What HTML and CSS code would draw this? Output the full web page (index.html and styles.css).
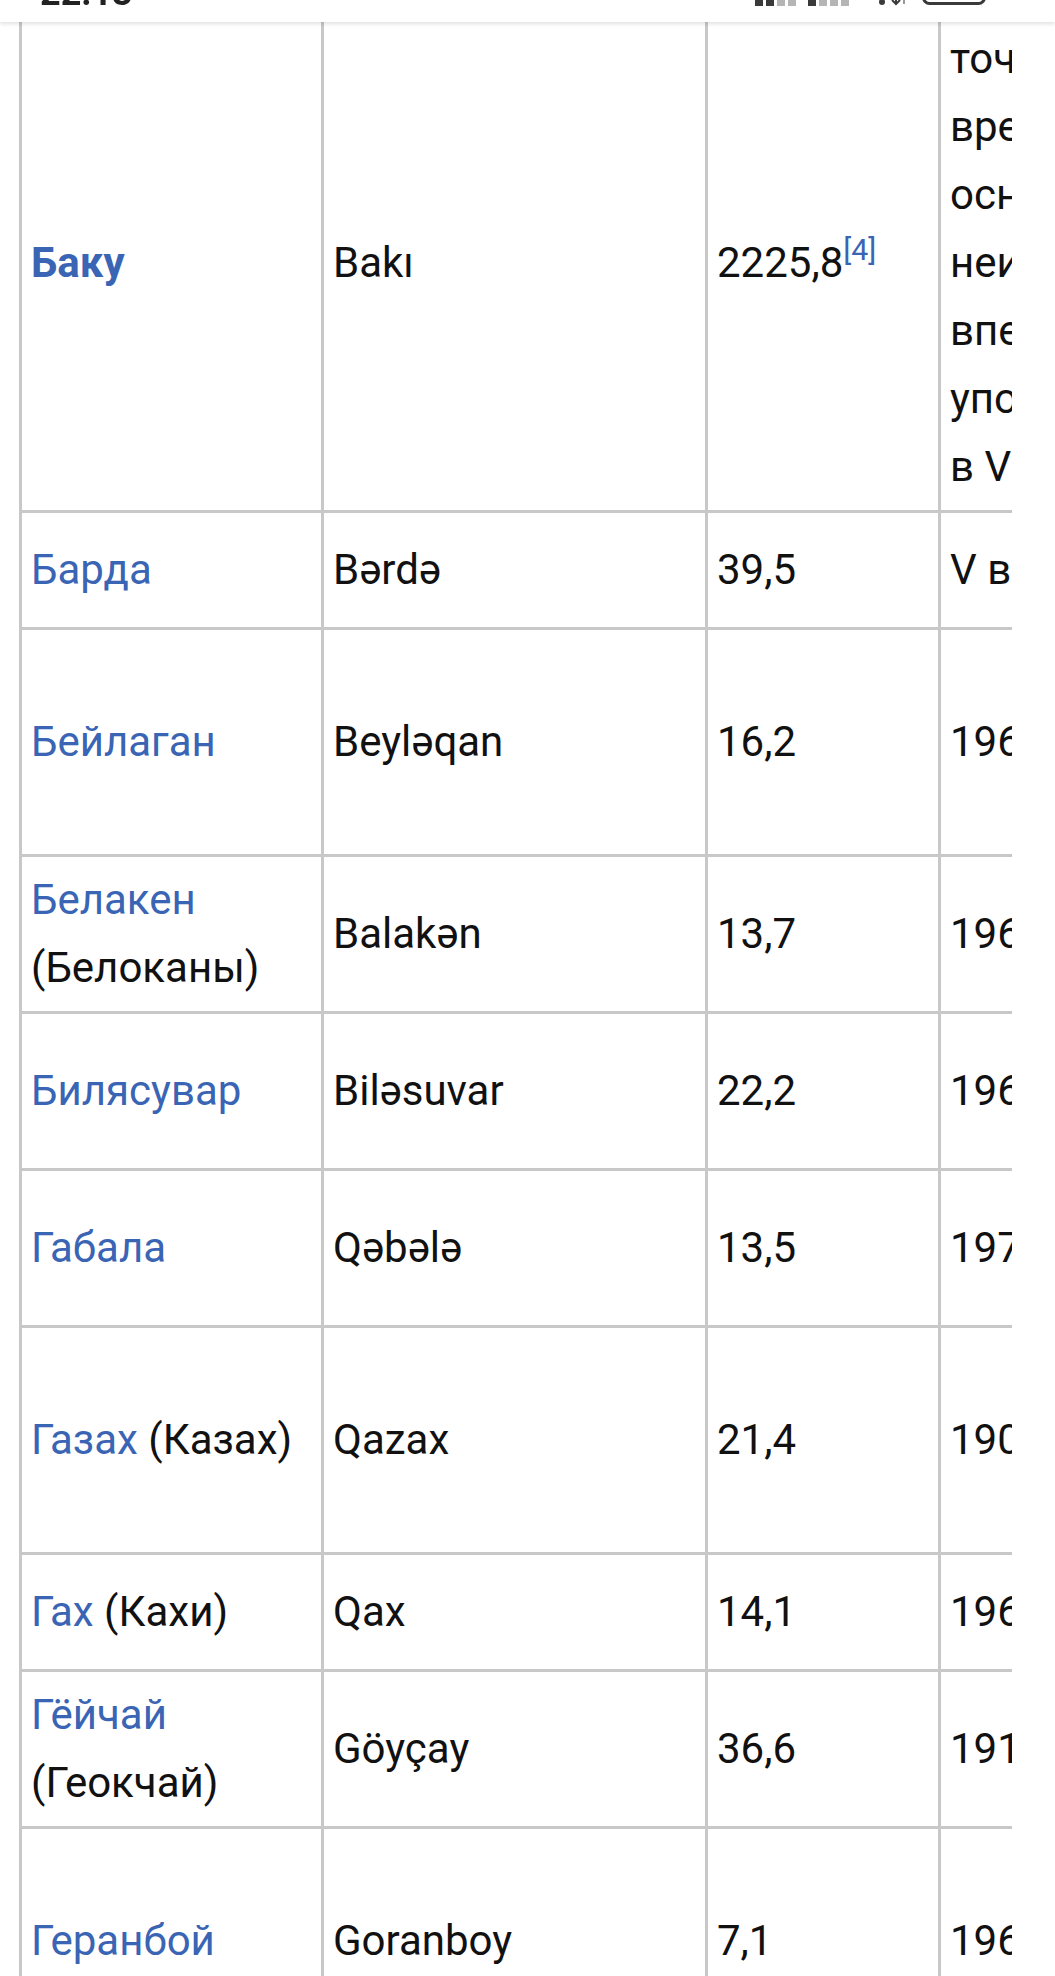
FILE: index.html
```html
<!DOCTYPE html>
<html lang="ru">
<head>
<meta charset="utf-8">
<title>Города Азербайджана</title>
<link rel="stylesheet" href="styles.css">
</head>
<body>
<header class="statusbar">
  <span class="time">22:13</span>
  <svg class="ic sig1" width="44" height="30" viewBox="0 0 44 30"><rect x="0" y="22" width="8" height="8" fill="#3a3a3a"/><rect x="11" y="16" width="8" height="14" fill="#3a3a3a"/><rect x="22" y="10" width="8" height="20" fill="#b5b5b5"/><rect x="33" y="2" width="8" height="28" fill="#b5b5b5"/></svg>
  <svg class="ic sig2" width="42" height="30" viewBox="0 0 42 30"><rect x="0" y="22" width="8" height="8" fill="#3a3a3a"/><rect x="11" y="16" width="8" height="14" fill="#b5b5b5"/><rect x="22" y="10" width="8" height="20" fill="#b5b5b5"/><rect x="33" y="2" width="8" height="28" fill="#b5b5b5"/></svg>
  <svg class="ic data" width="34" height="30" viewBox="0 0 34 30"><circle cx="6" cy="26" r="3" fill="#3a3a3a"/><path d="M20 4v24M16 24l4 4 4-4" stroke="#3a3a3a" stroke-width="2" fill="none"/><path d="M28 28V4M24 8l4-4 4 4" stroke="#9a9a9a" stroke-width="2" fill="none"/></svg>
  <svg class="ic batt" width="64" height="30" viewBox="0 0 64 30"><rect x="1.5" y="1.5" width="61" height="26" rx="6" fill="none" stroke="#3a3a3a" stroke-width="3"/><rect x="20" y="20" width="24" height="4" fill="#3a3a3a"/></svg>
</header>

<main class="scroller">
  <table class="cities">
    <colgroup>
      <col class="c-ru">
      <col class="c-az">
      <col class="c-pop">
      <col class="c-year">
    </colgroup>
    <tbody>
      <tr>
        <td><a class="link bold" href="#">Баку</a></td>
        <td>Bakı</td>
        <td>2225,8<sup class="ref">[4]</sup></td>
        <td>точное время основания неизвестно, впервые упоминается в V веке</td>
      </tr>
      <tr class="r-s">
        <td><a class="link" href="#">Барда</a></td>
        <td>Bərdə</td>
        <td>39,5</td>
        <td>V век</td>
      </tr>
      <tr class="r-l">
        <td><a class="link" href="#">Бейлаган</a></td>
        <td>Beyləqan</td>
        <td>16,2</td>
        <td>1963</td>
      </tr>
      <tr class="r-m">
        <td><a class="link" href="#">Белакен</a> (Белоканы)</td>
        <td>Balakən</td>
        <td>13,7</td>
        <td>1968</td>
      </tr>
      <tr class="r-m">
        <td><a class="link" href="#">Билясувар</a></td>
        <td>Biləsuvar</td>
        <td>22,2</td>
        <td>1963</td>
      </tr>
      <tr class="r-m">
        <td><a class="link" href="#">Габала</a></td>
        <td>Qəbələ</td>
        <td>13,5</td>
        <td>1970</td>
      </tr>
      <tr class="r-l">
        <td><a class="link" href="#">Газах</a> (Казах)</td>
        <td>Qazax</td>
        <td>21,4</td>
        <td>1908</td>
      </tr>
      <tr class="r-s">
        <td><a class="link" href="#">Гах</a> (Кахи)</td>
        <td>Qax</td>
        <td>14,1</td>
        <td>1968</td>
      </tr>
      <tr class="r-m">
        <td><a class="link" href="#">Гёйчай</a> (Геокчай)</td>
        <td>Göyçay</td>
        <td>36,6</td>
        <td>1918</td>
      </tr>
      <tr class="r-l">
        <td><a class="link" href="#">Геранбой</a></td>
        <td>Goranboy</td>
        <td>7,1</td>
        <td>1967</td>
      </tr>
    </tbody>
  </table>
</main>
</body>
</html>
```

FILE: styles.css
```css
html, body {
  margin: 0;
  padding: 0;
  background: #fff;
}

body {
  font-family: Roboto, "Noto Sans", "Liberation Sans", sans-serif;
  color: #111;
}

.statusbar {
  position: fixed;
  top: 0;
  left: 0;
  right: 0;
  height: 22px;
  background: #fff;
  box-shadow: 0 2px 4px rgba(0, 0, 0, 0.12);
  overflow: hidden;
  z-index: 10;
}

.time {
  position: absolute;
  left: 40px;
  bottom: 11px;
  font-size: 36px;
  line-height: 1;
  font-weight: 700;
  color: #222;
}

.ic {
  position: absolute;
  top: -24px;
}
.sig1 { left: 755px; }
.sig2 { left: 808px; }
.data { left: 876px; }
.batt { left: 922px; }

.scroller {
  margin: 13px 0 0 19px;
  width: 993px;
  overflow: hidden;
}

.cities {
  border-collapse: collapse;
  table-layout: fixed;
  width: 1142px;
  font-size: 42px;
  line-height: 68px;
}

.c-ru { width: 302px; }
.c-az { width: 384px; }
.c-pop { width: 233px; }
.c-year { width: 223px; }

.cities td {
  border: 3px solid #c8c8c8;
  padding: 9px 9px;
  vertical-align: middle;
  text-align: left;
}

.r-s { height: 117px; }
.r-m { height: 157px; }
.r-l { height: 227px; }

.link {
  color: #3a64b4;
  text-decoration: none;
}
.bold { font-weight: 700; }

.ref {
  color: #3a64b4;
  font-size: 0.72em;
  line-height: 1;
  vertical-align: 0.55em;
}
```
